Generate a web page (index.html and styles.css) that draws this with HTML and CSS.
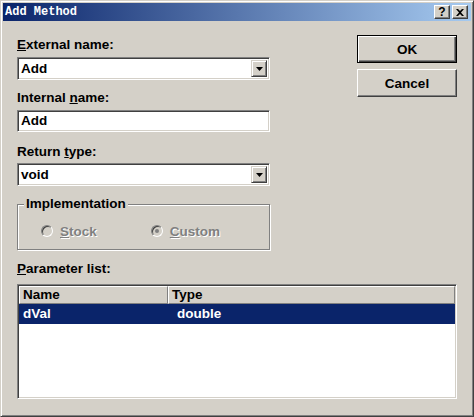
FILE: index.html
```
<!DOCTYPE html>
<html>
<head>
<meta charset="utf-8">
<link rel="stylesheet" href="styles.css">
</head>
<body>
<div class="window">
  <div class="titlebar">
    <span class="title">Add Method</span>
    <span class="tbtn">?</span>
    <span class="tbtn close">
      <svg width="8" height="7" viewBox="0 0 8 7"><path d="M0 0h2l2 2 2-2h2L5 3.5 8 7H6L4 5 2 7H0l3-3.5z" fill="#000"/></svg>
    </span>
  </div>
  <div class="content">
    <div class="top">
      <div class="left">
        <div class="label l1"><u>E</u>xternal name:</div>
        <div class="combo"><span class="val">Add</span><span class="drop"><svg width="7" height="4" viewBox="0 0 7 4"><path d="M0 0h7L3.5 4z" fill="#000"/></svg></span></div>
        <div class="label l2">Internal <u>n</u>ame:</div>
        <div class="edit">Add</div>
        <div class="label l3">Return <u>t</u>ype:</div>
        <div class="combo"><span class="val">void</span><span class="drop"><svg width="7" height="4" viewBox="0 0 7 4"><path d="M0 0h7L3.5 4z" fill="#000"/></svg></span></div>
        <div class="group">
          <span class="legend">Implementation</span>
          <div class="radios">
            <div class="radio"><span class="rcircle"></span><span class="rtext"><u>S</u>tock</span></div>
            <div class="radio r2"><span class="rcircle on"></span><span class="rtext"><u>C</u>ustom</span></div>
          </div>
        </div>
      </div>
      <div class="buttons">
        <div class="btn default">OK</div>
        <div class="btn">Cancel</div>
      </div>
    </div>
    <div class="label l4"><u>P</u>arameter list:</div>
    <div class="list">
      <div class="header">
        <div class="hcell c1">Name</div>
        <div class="hcell c2">Type</div>
      </div>
      <div class="row sel">
        <div class="cell c1">dVal</div>
        <div class="cell c2">double</div>
      </div>
    </div>
  </div>
</div>
</body>
</html>
```
FILE: styles.css
```
* { box-sizing: border-box; }
body { margin: 0; background: #d4d0c8; font-family: "Liberation Sans", Arial, sans-serif; font-weight: bold; font-size: 13.5px; color: #000; }
.window { width: 474px; height: 417px; border: 1px solid; border-color: #d4d0c8 #404040 #404040 #d4d0c8; box-shadow: inset 1px 1px #fff, inset -1px -1px #808080; padding: 2px; display: flex; flex-direction: column; }
.titlebar { height: 18px; display: flex; align-items: center; padding: 0 3px 0 2px; background: linear-gradient(to right, #0a246a, #a6caf0); }
.title { font-family: "Liberation Mono", monospace; font-weight: bold; font-size: 12px; color: #fff; flex: 1; }
.tbtn { width: 16px; height: 14px; background: #d4d0c8; border: 1px solid; border-color: #fff #404040 #404040 #fff; box-shadow: inset -1px -1px #808080; display: flex; align-items: center; justify-content: center; font-size: 12px; line-height: 1; margin-left: 2px; }
.content { flex: 1; padding: 14px 14px 0 14px; display: flex; flex-direction: column; }
.top { display: flex; justify-content: space-between; }
.left { width: 253px; }
.label { line-height: 16px; height: 16px; }
.l1 { margin-top: 2px; margin-bottom: 4px; }
.l2 { margin-top: 10px; margin-bottom: 4px; }
.l3 { margin-top: 12px; margin-bottom: 3px; }
.l4 { margin-top: 11px; margin-bottom: 7px; }
.combo, .edit { background: #fff; border: 1px solid; border-color: #808080 #fff #fff #808080; box-shadow: inset 1px 1px #404040, inset -1px -1px #d4d0c8; }
.combo { height: 23px; display: flex; align-items: center; padding: 2px 2px 2px 3px; }
.val { flex: 1; }
.drop { width: 16px; height: 17px; background: #d4d0c8; border: 1px solid; border-color: #d4d0c8 #404040 #404040 #d4d0c8; box-shadow: inset 1px 1px #fff, inset -1px -1px #808080; display: flex; align-items: center; justify-content: center; }
.edit { height: 22px; line-height: 20px; padding-left: 3px; }
.group { position: relative; margin-top: 18px; height: 46px; border: 1px solid #808080; box-shadow: inset 1px 1px #fff, 1px 1px #fff; }
.legend { position: absolute; top: -9px; left: 6px; padding: 0 2px; background: #d4d0c8; line-height: 16px; }
.radios { display: flex; padding: 19px 0 0 23px; }
.radio { display: flex; align-items: center; height: 14px; color: #808080; text-shadow: 1px 1px #fff; }
.r2 { margin-left: 54px; }
.rcircle { width: 12px; height: 12px; border-radius: 50%; border: 1px solid; border-color: #808080 #fff #fff #808080; background: #d4d0c8; box-shadow: inset 1px 1px #404040; margin-right: 7px; position: relative; }
.rcircle.on::after { content: ""; position: absolute; left: 3px; top: 3px; width: 4px; height: 4px; border-radius: 50%; background: #808080; }
.rtext { font-weight: bold; }
.buttons { width: 100px; display: flex; flex-direction: column; gap: 6px; }
.btn { height: 28px; display: flex; align-items: center; justify-content: center; border: 1px solid; border-color: #fff #404040 #404040 #fff; box-shadow: inset -1px -1px #808080; }
.btn.default { border: 1px solid #000; box-shadow: inset 1px 1px #fff, inset -1px -1px #404040, inset -2px -2px #808080; }
.list { height: 115px; background: #fff; border: 1px solid; border-color: #808080 #fff #fff #808080; box-shadow: inset 1px 1px #404040, inset -1px -1px #d4d0c8; padding: 1px; }
.header { display: flex; height: 18px; }
.hcell { background: #d4d0c8; border: 1px solid; border-color: #fff #808080 #808080 #fff; line-height: 16px; padding-left: 3px; }
.header .c1 { width: 149px; }
.header .c2 { flex: 1; }
.row { display: flex; height: 20px; line-height: 20px; }
.row.sel { background: #0a246a; color: #fff; }
.row .c1 { width: 149px; padding-left: 4px; }
.row .c2 { flex: 1; padding-left: 9px; }
```
